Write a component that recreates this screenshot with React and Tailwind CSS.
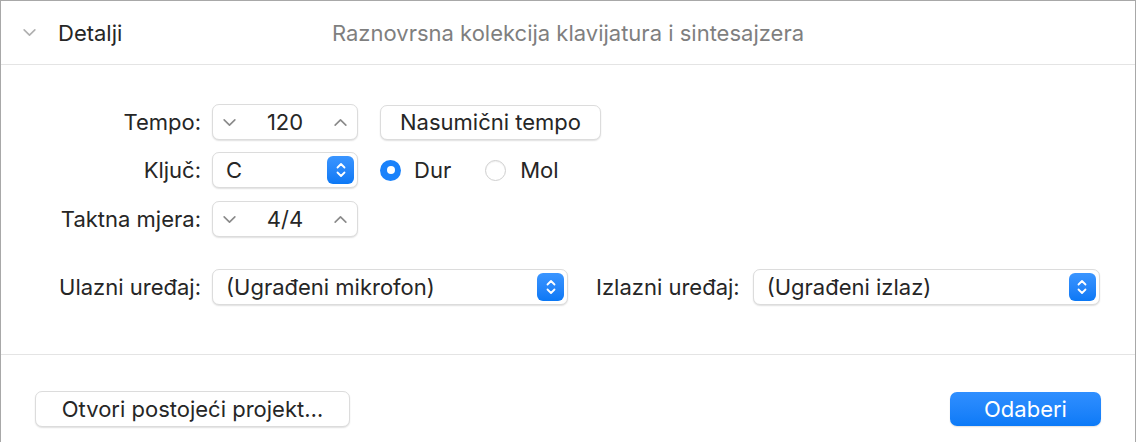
import React from 'react';

const font = { fontFamily: 'Inter, "Noto Sans", sans-serif' };

function Chevron({ dir = 'down', className = '' }) {
  const d = dir === 'down' ? 'M2 4.5 L7 9.5 L12 4.5' : 'M2 9.5 L7 4.5 L12 9.5';
  return (
    <svg width="15" height="15" viewBox="0 0 14 14" className={className}>
      <path d={d} fill="none" stroke="currentColor" strokeWidth="1.5" strokeLinecap="round" strokeLinejoin="round" />
    </svg>
  );
}

function Field({ className = '', children }) {
  return (
    <div
      className={
        'flex h-[36px] items-center rounded-[7px] border border-[#dcdcdc] bg-white shadow-[0_1px_1.5px_rgba(0,0,0,0.12)] ' +
        className
      }
    >
      {children}
    </div>
  );
}

function Stepper({ value }) {
  return (
    <Field className="w-[146px] justify-between px-[9px]">
      <Chevron dir="down" className="text-[#8a8a8a]" />
      <span className="text-[#262626]">{value}</span>
      <Chevron dir="up" className="text-[#8a8a8a]" />
    </Field>
  );
}

function SelectArrows() {
  return (
    <div className="flex h-[28px] w-[27px] items-center justify-center rounded-[6px] bg-gradient-to-b from-[#3a95ff] to-[#0a78f5]">
      <svg width="14" height="20" viewBox="0 0 14 20">
        <path d="M3.5 7.5 L7 4 L10.5 7.5 M3.5 12.5 L7 16 L10.5 12.5" fill="none" stroke="white" strokeWidth="1.8" strokeLinecap="round" strokeLinejoin="round" />
      </svg>
    </div>
  );
}

function Select({ value, className = '' }) {
  return (
    <Field className={'justify-between pl-[13px] pr-[3px] ' + className}>
      <span className="text-[#262626]">{value}</span>
      <SelectArrows />
    </Field>
  );
}

function Label({ children }) {
  return <div className="w-[200px] text-right text-[#262626]">{children}</div>;
}

export default function App() {
  return (
    <div style={font} className="h-[442px] w-[1136px] overflow-hidden bg-white text-[22px] leading-none">
      <div className="flex h-full flex-col border-x border-t border-[#a8a8a8]">
        {/* header */}
        <div className="grid h-[64px] shrink-0 grid-cols-[1fr_auto_1fr] items-center border-b border-[#e4e4e4]">
          <div className="flex items-center pl-[21px]">
            <Chevron dir="down" className="text-[#b0b0b0]" />
            <span className="ml-[21px] text-[#262626]">Detalji</span>
          </div>
          <span className="text-[#7f7f7f]">Raznovrsna kolekcija klavijatura i sintesajzera</span>
          <div />
        </div>

        {/* body */}
        <div className="flex h-[290px] shrink-0 flex-col border-b border-[#e4e4e4] pt-[39px]">
          <div className="flex items-center gap-[11px]">
            <Label>Tempo:</Label>
            <Stepper value="120" />
            <button className="ml-[11px] flex h-[35px] w-[221px] items-center justify-center rounded-[7px] border border-[#dcdcdc] bg-white text-[#262626] shadow-[0_1px_1.5px_rgba(0,0,0,0.12)]">
              Nasumični tempo
            </button>
          </div>
          <div className="mt-[12px] flex items-center gap-[11px]">
            <Label>Ključ:</Label>
            <Select value="C" className="w-[146px]" />
            <div className="ml-[11px] flex items-center">
              <span className="flex h-[21px] w-[21px] items-center justify-center rounded-full bg-[#1a82fb]">
                <span className="h-[8px] w-[8px] rounded-full bg-white" />
              </span>
              <span className="ml-[13px] text-[#262626]">Dur</span>
              <span className="ml-[34px] h-[21px] w-[21px] rounded-full border border-[#cfcfcf] bg-white shadow-[inset_0_1px_1px_rgba(0,0,0,0.06)]" />
              <span className="ml-[14px] text-[#262626]">Mol</span>
            </div>
          </div>
          <div className="mt-[13px] flex items-center gap-[11px]">
            <Label>Taktna mjera:</Label>
            <Stepper value="4/4" />
          </div>
          <div className="mt-[32px] flex items-center gap-[11px]">
            <Label>Ulazni uređaj:</Label>
            <Select value="(Ugrađeni mikrofon)" className="w-[356px]" />
            <span className="ml-[17px] text-[#262626]">Izlazni uređaj:</span>
            <Select value="(Ugrađeni izlaz)" className="ml-[2px] w-[347px]" />
          </div>
        </div>

        {/* footer */}
        <div className="flex flex-1 items-start justify-between pl-[34px] pr-[34px] pt-[36px]">
          <button className="flex h-[36px] w-[315px] items-center justify-center rounded-[7px] border border-[#dcdcdc] bg-white text-[#262626] shadow-[0_1px_1.5px_rgba(0,0,0,0.12)]">
            Otvori postojeći projekt…
          </button>
          <button className="mt-[1px] flex h-[34px] w-[151px] items-center justify-center rounded-[7px] bg-gradient-to-b from-[#2f8fff] to-[#0b7af7] text-white shadow-[0_1px_1.5px_rgba(0,0,0,0.12)]">
            Odaberi
          </button>
        </div>
      </div>
    </div>
  );
}
